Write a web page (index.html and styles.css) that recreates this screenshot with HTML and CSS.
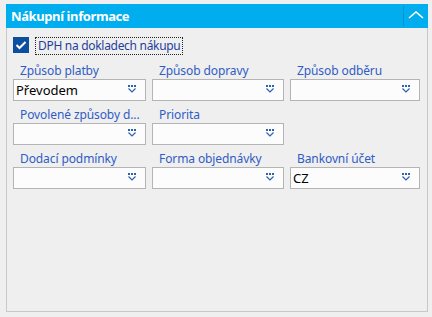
FILE: index.html
```html
<!DOCTYPE html>
<html>
<head>
<meta charset="utf-8">
<link rel="stylesheet" href="styles.css">
</head>
<body>
<div class="panel">
  <div class="header">
    <span class="title">Nákupní informace</span>
    <span class="sep"></span>
    <span class="collapse">
      <svg width="16" height="8" viewBox="0 0 16 8"><polyline points="1,7 8,1 15,7" fill="none" stroke="#fff" stroke-width="1.6"/></svg>
    </span>
  </div>
  <div class="body">
    <label class="check">
      <span class="box">
        <svg width="12" height="10" viewBox="0 0 12 10"><polyline points="1.5,5 4.5,8 10.5,2" fill="none" stroke="#fff" stroke-width="2"/></svg>
      </span>
      <span class="check-text">DPH na dokladech nákupu</span>
    </label>
    <div class="grid">
      <div class="field"><div class="lbl">Způsob platby</div><div class="input"><span class="val">Převodem</span><svg class="dd" width="8" height="8" viewBox="0 0 8 8"><rect x="0" y="0" width="2" height="2"/><rect x="3" y="0" width="2" height="2"/><rect x="6" y="0" width="2" height="2"/><polyline points="0.5,3.5 4,7 7.5,3.5"/></svg></div></div>
      <div class="field"><div class="lbl">Způsob dopravy</div><div class="input"><span class="val"></span><svg class="dd" width="8" height="8" viewBox="0 0 8 8"><rect x="0" y="0" width="2" height="2"/><rect x="3" y="0" width="2" height="2"/><rect x="6" y="0" width="2" height="2"/><polyline points="0.5,3.5 4,7 7.5,3.5"/></svg></div></div>
      <div class="field"><div class="lbl">Způsob odběru</div><div class="input"><span class="val"></span><svg class="dd" width="8" height="8" viewBox="0 0 8 8"><rect x="0" y="0" width="2" height="2"/><rect x="3" y="0" width="2" height="2"/><rect x="6" y="0" width="2" height="2"/><polyline points="0.5,3.5 4,7 7.5,3.5"/></svg></div></div>
      <div class="field"><div class="lbl">Povolené způsoby d...</div><div class="input"><span class="val"></span><svg class="dd" width="8" height="8" viewBox="0 0 8 8"><rect x="0" y="0" width="2" height="2"/><rect x="3" y="0" width="2" height="2"/><rect x="6" y="0" width="2" height="2"/><polyline points="0.5,3.5 4,7 7.5,3.5"/></svg></div></div>
      <div class="field"><div class="lbl">Priorita</div><div class="input"><span class="val"></span><svg class="dd" width="8" height="8" viewBox="0 0 8 8"><rect x="0" y="0" width="2" height="2"/><rect x="3" y="0" width="2" height="2"/><rect x="6" y="0" width="2" height="2"/><polyline points="0.5,3.5 4,7 7.5,3.5"/></svg></div></div>
      <div class="field empty"></div>
      <div class="field"><div class="lbl">Dodací podmínky</div><div class="input"><span class="val"></span><svg class="dd" width="8" height="8" viewBox="0 0 8 8"><rect x="0" y="0" width="2" height="2"/><rect x="3" y="0" width="2" height="2"/><rect x="6" y="0" width="2" height="2"/><polyline points="0.5,3.5 4,7 7.5,3.5"/></svg></div></div>
      <div class="field"><div class="lbl">Forma objednávky</div><div class="input"><span class="val"></span><svg class="dd" width="8" height="8" viewBox="0 0 8 8"><rect x="0" y="0" width="2" height="2"/><rect x="3" y="0" width="2" height="2"/><rect x="6" y="0" width="2" height="2"/><polyline points="0.5,3.5 4,7 7.5,3.5"/></svg></div></div>
      <div class="field"><div class="lbl">Bankovní účet</div><div class="input"><span class="val">CZ</span><svg class="dd" width="8" height="8" viewBox="0 0 8 8"><rect x="0" y="0" width="2" height="2"/><rect x="3" y="0" width="2" height="2"/><rect x="6" y="0" width="2" height="2"/><polyline points="0.5,3.5 4,7 7.5,3.5"/></svg></div></div>
    </div>
  </div>
</div>
</body>
</html>
```

FILE: styles.css
```css
html, body {
  margin: 0;
  padding: 0;
  background: #efefef;
}
body {
  font-family: "Noto Sans", "Open Sans", sans-serif;
  width: 432px;
  height: 317px;
  overflow: hidden;
}
.panel {
  margin: 4px 0 0 6px;
  width: 420px;
  height: 307px;
  border: 1px solid #c8c8c8;
  border-top: 0;
  background: #efefef;
}
.header {
  margin: 0 -1px;
  height: 24px;
  background: #00adef;
  display: flex;
  align-items: center;
}
.title {
  flex: 1;
  color: #fff;
  font-weight: bold;
  font-size: 13px;
  letter-spacing: -0.4px;
  padding-left: 5px;
  line-height: 24px;
}
.sep {
  width: 1px;
  height: 20px;
  background: #0a8fcb;
}
.collapse {
  width: 24px;
  height: 24px;
  display: flex;
  align-items: center;
  justify-content: center;
}
.collapse svg {
  margin-top: -2px;
}
.body {
  padding: 9px 0 0 6px;
}
.check {
  display: flex;
  align-items: center;
  height: 18px;
}
.box {
  width: 16px;
  height: 16px;
  background: #0b4f9e;
  display: flex;
  align-items: center;
  justify-content: center;
  margin-top: -2px;
}
.check-text {
  margin-left: 6px;
  border: 1px dotted #222;
  padding: 0 1px 0 2px;
  font-size: 12px;
  letter-spacing: -0.3px;
  line-height: 16px;
  color: #1f3f9c;
}
.grid {
  margin-top: 8px;
  display: grid;
  grid-template-columns: 133px 132px 130px;
  column-gap: 6px;
  row-gap: 6px;
}
.lbl {
  font-size: 12px;
  line-height: 16px;
  letter-spacing: -0.1px;
  color: #2f5cc5;
  padding-left: 7px;
  white-space: nowrap;
}
.input {
  height: 20px;
  border: 1px solid #b4b4b4;
  background: #fcfcfc;
  display: flex;
  align-items: center;
}
.val {
  flex: 1;
  font-size: 13px;
  color: #000;
  padding-left: 2px;
}
.dd {
  flex: none;
  align-self: flex-start;
  margin: 5px 9px 0 0;
  fill: #2d5fb5;
  overflow: visible;
}
.dd polyline {
  fill: none;
  stroke: #2d5fb5;
  stroke-width: 1.2;
}
```
